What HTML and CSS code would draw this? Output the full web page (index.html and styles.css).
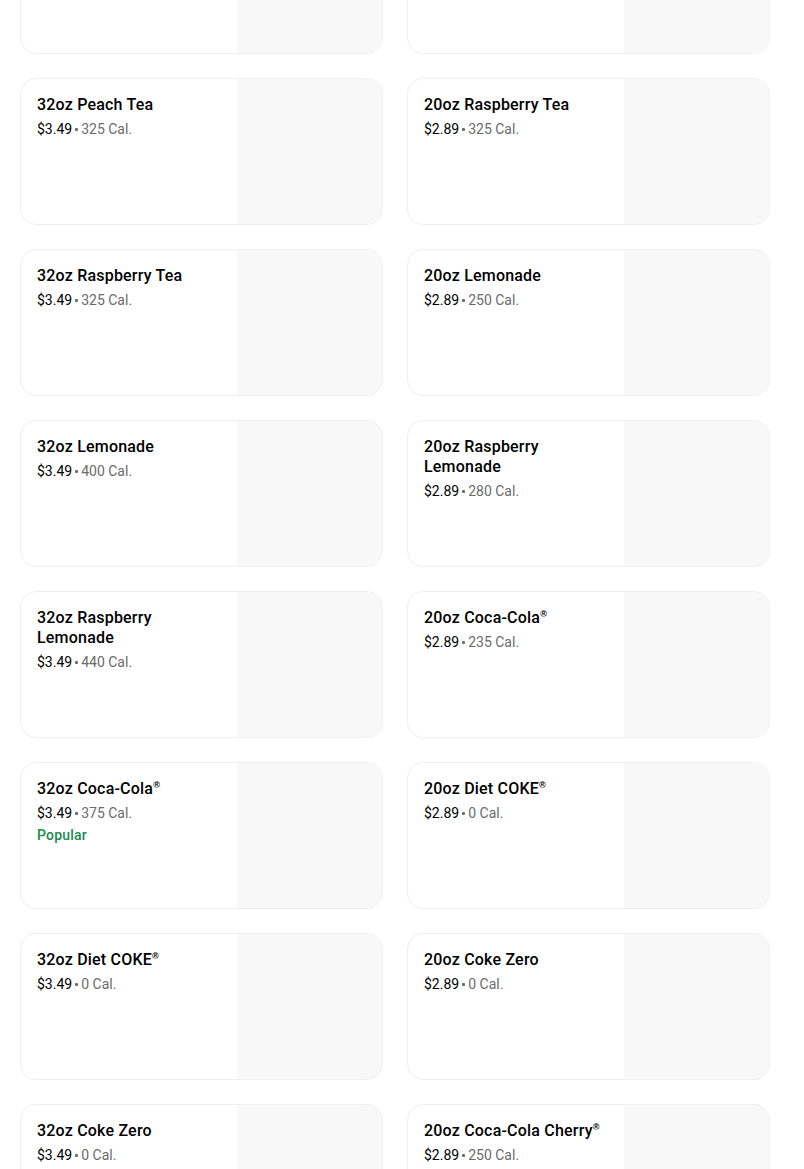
FILE: index.html
```html
<!DOCTYPE html>
<html>
<head>
<meta charset="utf-8">
<link rel="stylesheet" href="styles.css">
</head>
<body>
<div class="grid">
  <div class="card"><div class="info"></div><div class="thumb"></div></div>
  <div class="card"><div class="info"></div><div class="thumb"></div></div>

  <div class="card"><div class="info"><div class="title">32oz Peach Tea</div><div class="meta"><span class="price">$3.49</span><span class="dot"></span><span class="cal">325 Cal.</span></div></div><div class="thumb"></div></div>
  <div class="card"><div class="info"><div class="title">20oz Raspberry Tea</div><div class="meta"><span class="price">$2.89</span><span class="dot"></span><span class="cal">325 Cal.</span></div></div><div class="thumb"></div></div>

  <div class="card"><div class="info"><div class="title">32oz Raspberry Tea</div><div class="meta"><span class="price">$3.49</span><span class="dot"></span><span class="cal">325 Cal.</span></div></div><div class="thumb"></div></div>
  <div class="card"><div class="info"><div class="title">20oz Lemonade</div><div class="meta"><span class="price">$2.89</span><span class="dot"></span><span class="cal">250 Cal.</span></div></div><div class="thumb"></div></div>

  <div class="card"><div class="info"><div class="title">32oz Lemonade</div><div class="meta"><span class="price">$3.49</span><span class="dot"></span><span class="cal">400 Cal.</span></div></div><div class="thumb"></div></div>
  <div class="card"><div class="info"><div class="title">20oz Raspberry Lemonade</div><div class="meta"><span class="price">$2.89</span><span class="dot"></span><span class="cal">280 Cal.</span></div></div><div class="thumb"></div></div>

  <div class="card"><div class="info"><div class="title">32oz Raspberry Lemonade</div><div class="meta"><span class="price">$3.49</span><span class="dot"></span><span class="cal">440 Cal.</span></div></div><div class="thumb"></div></div>
  <div class="card"><div class="info"><div class="title">20oz Coca-Cola<span class="reg">®</span></div><div class="meta"><span class="price">$2.89</span><span class="dot"></span><span class="cal">235 Cal.</span></div></div><div class="thumb"></div></div>

  <div class="card"><div class="info"><div class="title">32oz Coca-Cola<span class="reg">®</span></div><div class="meta"><span class="price">$3.49</span><span class="dot"></span><span class="cal">375 Cal.</span></div><div class="badge">Popular</div></div><div class="thumb"></div></div>
  <div class="card"><div class="info"><div class="title">20oz Diet COKE<span class="reg">®</span></div><div class="meta"><span class="price">$2.89</span><span class="dot"></span><span class="cal">0 Cal.</span></div></div><div class="thumb"></div></div>

  <div class="card"><div class="info"><div class="title">32oz Diet COKE<span class="reg">®</span></div><div class="meta"><span class="price">$3.49</span><span class="dot"></span><span class="cal">0 Cal.</span></div></div><div class="thumb"></div></div>
  <div class="card"><div class="info"><div class="title">20oz Coke Zero</div><div class="meta"><span class="price">$2.89</span><span class="dot"></span><span class="cal">0 Cal.</span></div></div><div class="thumb"></div></div>

  <div class="card"><div class="info"><div class="title">32oz Coke Zero</div><div class="meta"><span class="price">$3.49</span><span class="dot"></span><span class="cal">0 Cal.</span></div></div><div class="thumb"></div></div>
  <div class="card"><div class="info"><div class="title">20oz Coca-Cola Cherry<span class="reg">®</span></div><div class="meta"><span class="price">$2.89</span><span class="dot"></span><span class="cal">250 Cal.</span></div></div><div class="thumb"></div></div>
</div>
</body>
</html>
```
FILE: styles.css
```css
html, body {
  margin: 0;
  padding: 0;
  background: #ffffff;
  overflow: hidden;
}
body {
  font-family: Roboto, "Noto Sans", "Liberation Sans", sans-serif;
  color: #000000;
}
.grid {
  display: grid;
  grid-template-columns: 363px 363px;
  column-gap: 24px;
  row-gap: 24px;
  padding: 0 0 0 20px;
  margin-top: -93px;
}
.card {
  height: 147px;
  box-sizing: border-box;
  border: 1px solid #efefef;
  border-radius: 16px;
  overflow: hidden;
  display: flex;
  background: #ffffff;
}
.info {
  flex: 1;
  padding: 16px 16px 16px 16px;
  min-width: 0;
}
.thumb {
  width: 145px;
  flex: none;
  background: #f8f8f8;
}
.title {
  font-size: 16px;
  line-height: 20px;
  font-weight: 500;
  letter-spacing: 0.2px;
  color: #000000;
}
.reg {
  font-family: "Liberation Sans", "DejaVu Sans", sans-serif;
  font-size: 9px;
  font-weight: 700;
  vertical-align: 6px;
  line-height: 0;
  color: #000000;
}
.meta {
  margin-top: 4px;
  font-size: 14px;
  line-height: 20px;
  display: flex;
  align-items: center;
}
.price {
  color: #000000;
}
.dot {
  width: 3px;
  height: 3px;
  border-radius: 1px;
  background: #6b6b6b;
  margin: 1px 3px 0 3px;
}
.cal {
  color: #6b6b6b;
}
.badge {
  margin-top: 2px;
  font-size: 14px;
  line-height: 20px;
  font-weight: 500;
  letter-spacing: 0.2px;
  color: #1a8a4e;
}
```
